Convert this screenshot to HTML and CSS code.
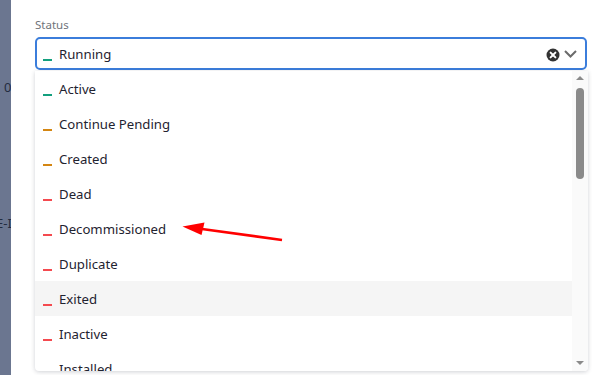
FILE: index.html
```html
<!DOCTYPE html>
<html>
<head>
<meta charset="utf-8">
<link rel="stylesheet" href="styles.css">
</head>
<body>
<div class="page">
  <div class="backdrop">
    <div class="bg-num">0</div>
    <div class="bg-code">E-I</div>
  </div>
  <div class="modal">
    <div class="label">Status</div>
    <div class="field">
      <div class="control">
        <span class="dash green"></span>
        <span class="value">Running</span>
        <span class="indicators">
          <svg class="clear" width="14" height="14" viewBox="0 0 14 14"><circle cx="7" cy="7" r="6.5" fill="#333"/><path d="M4.6 4.6 L9.4 9.4 M9.4 4.6 L4.6 9.4" stroke="#fff" stroke-width="2" stroke-linecap="round"/></svg>
          <svg class="chev" width="13" height="8" viewBox="0 0 13 8"><path d="M1 1 L6.5 6.5 L12 1" fill="none" stroke="#6b6b6b" stroke-width="2"/></svg>
        </span>
      </div>
      <div class="menu">
        <ul class="options">
          <li class="option"><span class="dash green"></span>Active</li>
          <li class="option"><span class="dash orange"></span>Continue Pending</li>
          <li class="option"><span class="dash orange"></span>Created</li>
          <li class="option"><span class="dash red"></span>Dead</li>
          <li class="option"><span class="dash red"></span>Decommissioned</li>
          <li class="option"><span class="dash red"></span>Duplicate</li>
          <li class="option hover"><span class="dash red"></span>Exited</li>
          <li class="option"><span class="dash red"></span>Inactive</li>
          <li class="option"><span class="dash red"></span>Installed</li>
        </ul>
        <div class="scrollbar">
          <span class="arrow-up"></span>
          <span class="thumb"></span>
          <span class="track"></span>
          <span class="arrow-down"></span>
        </div>
      </div>
      <svg class="pointer" width="120" height="30" viewBox="0 0 120 30">
        <path d="M100 20 L20 9" stroke="#ff0000" stroke-width="2.6" fill="none"/>
        <path d="M0.5 6.5 L22.5 2.5 L19.5 15 Z" fill="#ff0000"/>
      </svg>
    </div>
  </div>
</div>
</body>
</html>
```

FILE: styles.css
```css
* { box-sizing: border-box; }
html, body { margin: 0; padding: 0; }
body {
  width: 600px;
  height: 375px;
  overflow: hidden;
  font-family: "Noto Sans", "Open Sans", sans-serif;
  background: #fff;
}
.page {
  display: flex;
  height: 375px;
}
.backdrop {
  width: 11px;
  flex: none;
  background: #6b7690;
  color: #232c40;
  font-size: 13px;
  overflow: hidden;
  padding-top: 77px;
}
.bg-num { padding-left: 4px; line-height: 20px; }
.bg-code { margin-top: 116px; margin-left: -4px; line-height: 20px; white-space: nowrap; }

.modal {
  flex: 1;
  padding: 17px 13px 0 24px;
  position: relative;
}
.label {
  font-size: 11.5px;
  color: #6f737a;
  line-height: 16px;
  margin-bottom: 4px;
}
.field { position: relative; }
.control {
  height: 33px;
  border: 2px solid #3b7ddb;
  border-radius: 5px;
  display: flex;
  align-items: center;
  padding: 1px 8px 0 6px;
}
.dash {
  display: inline-block;
  width: 9px;
  height: 2px;
  margin-right: 7px;
  position: relative;
  top: 6px;
  flex: none;
}
.green { background: #13a07e; }
.orange { background: #d48612; }
.red { background: #f44a4f; }
.value {
  font-size: 13.2px;
  color: #1f2330;
  flex: 1;
}
.indicators {
  display: flex;
  align-items: center;
  gap: 4px;
}
.clear { margin-top: 1px; }
.chev { margin-top: 0; }

.menu {
  position: absolute;
  top: 34px;
  left: 0;
  width: 553px;
  height: 300px;
  background: #fff;
  box-shadow: 0 1px 4px rgba(40, 50, 70, 0.22);
  border-radius: 0 0 4px 4px;
  display: flex;
  overflow: hidden;
}
.options {
  list-style: none;
  margin: 0;
  padding: 0;
  flex: 1;
}
.option {
  height: 35px;
  display: flex;
  align-items: center;
  padding: 1px 0 0 8px;
  font-size: 13.2px;
  color: #1f2330;
}
.option.hover { background: #f5f5f5; }
.scrollbar {
  width: 16px;
  flex: none;
  background: #fafafa;
  display: flex;
  flex-direction: column;
  align-items: center;
  padding: 5px 0 6px;
}
.arrow-up {
  width: 0; height: 0;
  border-left: 4px solid transparent;
  border-right: 4px solid transparent;
  border-bottom: 4px solid #8a8a8a;
}
.thumb {
  margin-top: 8px;
  width: 8px;
  height: 91px;
  background: #8a8a8a;
  border-radius: 4px;
}
.track { flex: 1; }
.arrow-down {
  width: 0; height: 0;
  border-left: 4px solid transparent;
  border-right: 4px solid transparent;
  border-top: 4px solid #8a8a8a;
}
.pointer {
  position: absolute;
  left: 147px;
  top: 183px;
}
```
